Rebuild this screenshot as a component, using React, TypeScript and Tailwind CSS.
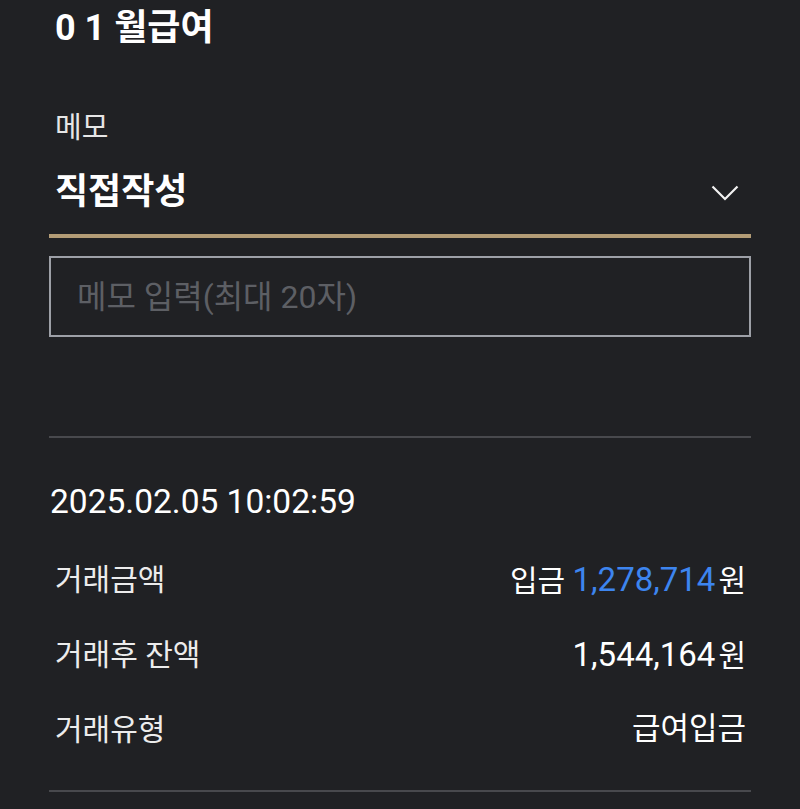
import React from 'react';

const rows = [
  { label: '거래금액', kind: 'amount' },
  { label: '거래후 잔액', kind: 'balance' },
  { label: '거래유형', kind: 'type' },
];

const App: React.FC = () => {
  return (
    <div
      className="min-h-[809px] w-full bg-[#202124] text-white px-[49px]"
      style={{ fontFamily: 'Roboto, "Noto Sans CJK KR", sans-serif' }}
    >
      <div className="pt-[6px] pl-[6px] text-[36px] font-bold leading-[44px]">0 1 월급여</div>

      <div className="mt-[60px] pl-[6px] text-[29px] leading-[36px] text-[#e6e6e6]">메모</div>

      <div className="mt-[24px] flex items-center justify-between border-b-[4px] border-[#b39c76] pb-[20px] pl-[6px]">
        <span className="text-[36px] font-bold leading-[44px]">직접작성</span>
        <svg width="28" height="16" viewBox="0 0 28 16" className="mr-[12px] mt-[2px]">
          <path d="M1.5 1.5 L14 14 L26.5 1.5" fill="none" stroke="#f2f2f2" strokeWidth="2.2" />
        </svg>
      </div>

      <div className="mt-[18px] flex h-[81px] items-center border-2 border-[#9da0a7] pl-[26px] text-[32px] text-[#5d5f64]">
        메모 입력(최대 20자)
      </div>

      <div className="mt-[99px] h-[2px] bg-[#48494d]" />

      <div className="mt-[44px] pl-[1px] text-[33.5px] leading-[40px]">2025.02.05 10:02:59</div>

      <div className="mt-[20px] flex flex-col">
        {rows.map((r) => (
          <div key={r.label} className="flex h-[75px] items-center justify-between pl-[6px] pr-[5px] text-[30px]">
            <span className="text-[#ececec]">{r.label}</span>
            {r.kind === 'amount' && (
              <span>
                입금 <span className="text-[33px] text-[#3d85ef]">1,278,714</span>
                <span className="ml-[3px]">원</span>
              </span>
            )}
            {r.kind === 'balance' && (
              <span>
                <span className="text-[33px]">1,544,164</span>
                <span className="ml-[3px]">원</span>
              </span>
            )}
            {r.kind === 'type' && <span className="text-[31px]">급여입금</span>}
          </div>
        ))}
      </div>

      <div className="mt-[23px] h-[2px] bg-[#48494d]" />
    </div>
  );
};

export default App;
